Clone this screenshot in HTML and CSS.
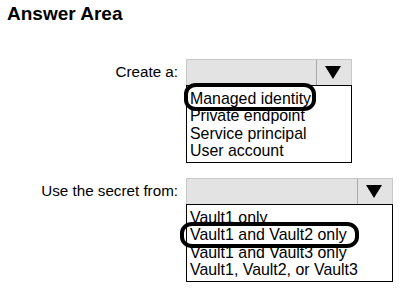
FILE: index.html
```html
<!DOCTYPE html>
<html lang="en">
<head>
  <meta charset="UTF-8" />
  <title>Answer Area</title>
  <link rel="stylesheet" href="styles.css">
</head>
<body>

  <div class="page">
    <h1>Answer Area</h1>

    <div class="field">
      <label class="field-label">Create a:</label>
      <div class="dropdown dropdown-sm">
        <div class="select">
          <span class="select-value"></span>
          <span class="select-btn">
            <svg width="16" height="13" viewBox="0 0 16 13"><polygon points="0,0 16,0 8,13" fill="#000"/></svg>
          </span>
        </div>
        <ul class="options">
          <li class="marked">Managed identity<span class="mark mark-a"></span></li>
          <li>Private endpoint</li>
          <li>Service principal</li>
          <li>User account</li>
        </ul>
      </div>
    </div>

    <div class="field">
      <label class="field-label">Use the secret from:</label>
      <div class="dropdown dropdown-lg">
        <div class="select">
          <span class="select-value"></span>
          <span class="select-btn">
            <svg width="16" height="13" viewBox="0 0 16 13"><polygon points="0,0 16,0 8,13" fill="#000"/></svg>
          </span>
        </div>
        <ul class="options">
          <li>Vault1 only</li>
          <li class="marked">Vault1 and Vault2 only<span class="mark mark-b"></span></li>
          <li>Vault1 and Vault3 only</li>
          <li>Vault1, Vault2, or Vault3</li>
        </ul>
      </div>
    </div>
  </div>

</body>
</html>
```

FILE: styles.css
```css
body { margin: 0; background: #fff; font-family: "Liberation Sans", Arial, sans-serif; color: #000; }
.page { padding: 3px 0 0 7px; }
h1 { margin: 0; font-size: 19px; font-weight: bold; }

.field { display: flex; align-items: flex-start; gap: 8px; margin-left: -7px; }
.field:first-of-type { margin-top: 34px; }
.field + .field { margin-top: 15px; }
.field-label { width: 178px; text-align: right; font-size: 15.2px; line-height: 26px; }

.dropdown-sm { width: 166px; }
.dropdown-lg { width: 207px; }

.select { display: flex; height: 26px; box-sizing: border-box; background: #e3e3e3; border: 1px solid #c8c8c8; border-bottom: none; }
.select-value { flex: 1; }
.select-btn { width: 32px; display: flex; align-items: center; justify-content: center; padding-right: 2px; border-left: 1px solid #a8a8a8; }

.options { list-style: none; margin: 0; padding: 4px 0 3px; border: 1px solid #000; background: #fff; }
.options li { padding-left: 3px; font-size: 15.9px; line-height: 17.3px; white-space: nowrap; }
.options li.marked { position: relative; }

.mark { position: absolute; z-index: 1; border: 4px solid #000; border-radius: 12px / 11px; box-sizing: border-box; }
.mark-a { left: -3px; top: -7px; width: 132px; height: 28px; }
.mark-b { left: -7px; top: -4px; width: 179px; height: 26px; }
```
